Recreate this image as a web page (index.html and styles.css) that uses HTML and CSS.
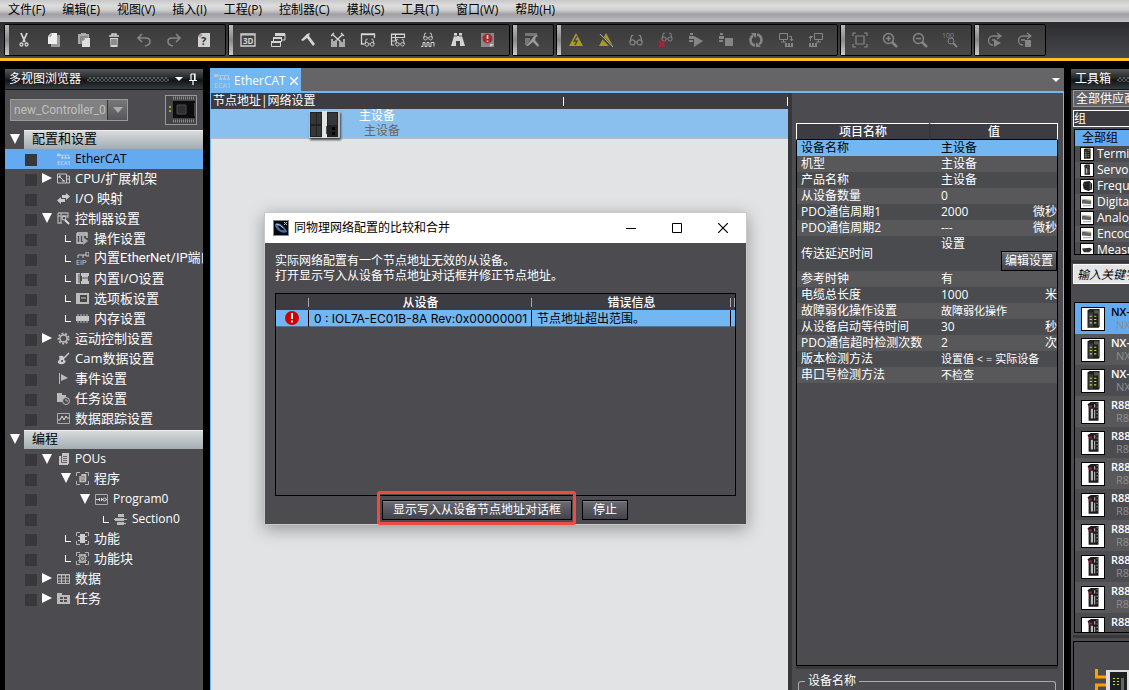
FILE: index.html
```html
<!DOCTYPE html>
<html lang="zh-CN">
<head>
  <meta charset="UTF-8">
  <meta name="viewport" content="width=device-width, initial-scale=1.0">
  <title>new_Controller_0</title>
  <link rel="stylesheet" href="styles.css">
</head>
<body>
  <!-- shared icons -->
  <svg class="sprite" width="0" height="0">
    <symbol id="glasses" viewBox="0 0 14 12">
      <g fill="none" stroke="currentColor" stroke-width="1.2">
        <circle cx="3.4" cy="8.4" r="2.5"/><circle cx="10.6" cy="8.4" r="2.5"/>
        <path d="M1 8L2.6 1.5H4.5M13 8L11.4 1.5H9.5M6 8h2"/>
      </g>
    </symbol>
    <symbol id="frame" viewBox="0 0 13 13">
      <path d="M4 .5H.5V4M9 .5h3.500V4M4 12.500H.5V9M9 12.500h3.500V9" fill="none" stroke="#b4b4b4"/>
    </symbol>
    <symbol id="doc" viewBox="0 0 13 13">
      <path d="M5 0h7v11h-1v1H2V3h3z" fill="#c4c4c4"/>
      <path d="M6 3.500h4M6 5.500h4M6 7.500h4M4.500 3v6.500H10" stroke="#66666a" fill="none"/>
    </symbol>
    <symbol id="unit" viewBox="0 0 20 20">
      <path d="M5 2l2-1h9v16l-1 1H5z" fill="#20211f"/>
      <path d="M6 4h4v13H6z" fill="#3c3d40"/>
      <path d="M11 2h4v3h-4z" fill="#555"/>
      <path d="M7 7h2v1H7zM7 10h2v1H7zM7 13h2v1H7zM11 7h2v1h-2zM11 10h2v1h-2zM11 13h2v1h-2z" fill="#d8d636"/>
      <path d="M15 3h1v13h-1z" fill="#777"/>
    </symbol>
    <symbol id="drive" viewBox="0 0 20 20">
      <path d="M5 3l3-2h7v17H6V5z" fill="#1c1c1e"/>
      <path d="M8 7h2v9H8zM11 3h1v3h-1zM11 8h1v8h-1z" fill="#b8b8b8"/>
      <path d="M13 2h2v1h-2zM13 5h2v1h-2zM13 8h2v1h-2zM13 11h2v1h-2zM13 14h2v1h-2z" fill="#777"/>
      <path d="M6 4h3v2H6z" fill="#a51c24"/>
    </symbol>
    <symbol id="slice" viewBox="0 0 13 13">
      <path d="M1 4l10 1v4L1 8z" fill="#666"/>
      <path d="M1 3l10 1v1L1 4z" fill="#b9b34a"/>
      <path d="M2 10h9v1H2z" fill="#999"/>
    </symbol>
  </svg>

  <div class="app">
    <nav class="menubar">
      <a href="#">文件(F)</a>
      <a href="#">编辑(E)</a>
      <a href="#">视图(V)</a>
      <a href="#">插入(I)</a>
      <a href="#">工程(P)</a>
      <a href="#">控制器(C)</a>
      <a href="#">模拟(S)</a>
      <a href="#">工具(T)</a>
      <a href="#">窗口(W)</a>
      <a href="#">帮助(H)</a>
    </nav>

    <div class="toolbar">
      <div class="tool-group">
        <button aria-label="剪切"><svg viewBox="0 0 16 16"><path d="M5 1l4 9M11 1L7 10" stroke="currentColor" stroke-width="1.800"/><g fill="none" stroke="currentColor" stroke-width="1.300"><circle cx="5.500" cy="12.500" r="1.500"/><circle cx="10.500" cy="12.500" r="1.500"/></g></svg></button>
        <button aria-label="复制"><svg viewBox="0 0 16 16"><path d="M5 3h9v12H5z" fill="#999"/><path d="M5 1h6v11H2V4z" fill="#eee"/><path d="M5 1v3H2" fill="none" stroke="#888"/></svg></button>
        <button aria-label="粘贴"><svg viewBox="0 0 16 16"><path d="M2 2h3V1h5v1h3v4h-1V4H4v8H2z" fill="#aaa"/><path d="M4 4h8v3H6v5H4z" fill="#888"/><path d="M8 6h6v9H6V8z" fill="#ddd"/><path d="M8 6v2H6" fill="none" stroke="#777"/></svg></button>
        <button aria-label="删除"><svg viewBox="0 0 16 16"><path d="M3 4h10M6 3.500V2h4v1.500" fill="none" stroke="currentColor" stroke-width="1.500"/><path d="M4 6h8l-.5 9h-7z" fill="currentColor"/><path d="M6 7v6M8 7v6M10 7v6" stroke="#444"/></svg></button>
        <button class="dim" aria-label="撤消"><svg viewBox="0 0 16 16"><path d="M2 6h8q4 0 4 3.500T9 14M6 2L2 6l4 4" fill="none" stroke="currentColor" stroke-width="1.600"/></svg></button>
        <button class="dim" aria-label="恢复"><svg viewBox="0 0 16 16"><path d="M14 6H6Q2 6 2 9.500T7 14M10 2l4 4-4 4" fill="none" stroke="currentColor" stroke-width="1.600"/></svg></button>
        <button aria-label="帮助"><svg viewBox="0 0 16 16"><path d="M5 1h9v14H2V4z" fill="#d0d0d0"/><path d="M5 1v3H2" fill="none" stroke="#777"/><text x="5" y="13" font-size="11" font-weight="700" fill="#333">?</text></svg></button>
      </div>
      <div class="tool-group">
        <button aria-label="3D"><svg viewBox="0 0 16 16"><path d="M1 2h14v12H1z" fill="none" stroke="currentColor" stroke-width="1.300"/><path d="M1 3h14" stroke="currentColor"/><text x="3" y="12" font-size="8" font-weight="700" fill="currentColor">3D</text></svg></button>
        <button aria-label="窗口"><svg viewBox="0 0 16 16"><path d="M5 2h10v6h-3" fill="none" stroke="currentColor"/><path d="M5 1h10v3H5zM3 5h9v2H3zM1 9h10v2H1z" fill="currentColor"/><path d="M1.500 10v4.500h9V10M3.500 7v2M11.500 7v3" fill="none" stroke="currentColor"/></svg></button>
        <button aria-label="编译"><svg viewBox="0 0 16 16"><path d="M1 8l6-6 3-1-1 3 6 8-2 2-6-8-4 3z" fill="currentColor"/></svg></button>
        <button aria-label="全部编译"><svg viewBox="0 0 16 16"><path d="M2 2l9 8M13 2L5 10M1 4l3-3M11 1l3 3" stroke="currentColor" stroke-width="1.300"/><path d="M1 7h2v2h2V8h2v7H1zM9 9h2v1h2V7h2v8H9z" fill="#aaa"/></svg></button>
        <button aria-label="监视窗口"><svg viewBox="0 0 16 16"><path d="M14.500 6V2h-13v10H4M1 2.500h14" fill="none" stroke="currentColor" stroke-width="1.300"/><use href="#glasses" x="4" y="6" width="11" height="9"/></svg></button>
        <button aria-label="监视表"><svg viewBox="0 0 16 16"><path d="M14.500 6V2h-13v11H4M1 2.500h14M1 5.500h13M1 9h4M5.500 2v7" fill="none" stroke="currentColor" stroke-width="1.200"/><use href="#glasses" x="5" y="6" width="10" height="9"/></svg></button>
        <button aria-label="数据跟踪"><svg viewBox="0 0 16 16"><use href="#glasses" x="3" y="0" width="10" height="9"/><path d="M1 14.500h2v-4h2v4h2v-4h2v4h2v-4h3v4" fill="none" stroke="currentColor"/></svg></button>
        <button aria-label="查找"><svg viewBox="0 0 16 16"><path d="M4 1h3v3h2V1h3v3l3 10h-5V9H6v5H1L4 4z" fill="currentColor"/><path d="M4 4h3M9 4h3" stroke="#555"/></svg></button>
        <button aria-label="故障排除"><svg viewBox="0 0 16 16"><path d="M1 1h13v14H1z" fill="#8b8a8b"/><circle cx="7.500" cy="6.500" r="5" fill="#a52832"/><path d="M7.500 3v4M7.500 8.500v1.500" stroke="#ccc" stroke-width="1.800"/><path d="M10 15v-3h4z" fill="#ccc"/></svg></button>
      </div>
      <div class="tool-group">
        <button class="dim" aria-label="工具"><svg viewBox="0 0 16 16"><path d="M1 1h12v3H1zM1 6h5v2l-3 5H1z" fill="#777"/><path d="M7 8l3-4 3-1 1 1-2 1-1 3 4 5-1 2-5-5-5 4H2z" fill="#999"/></svg></button>
      </div>
      <div class="tool-group dim">
        <button aria-label="在线"><svg viewBox="0 0 16 16"><path d="M8 1l7 13H1z" fill="#a8992e"/><path d="M9 4L6 9h3l-2 4" fill="none" stroke="#444" stroke-width="1.300"/></svg></button>
        <button aria-label="离线"><svg viewBox="0 0 16 16"><path d="M8 1l7 13H1z" fill="#a8992e"/><path d="M1 2l13 13" stroke="#444" stroke-width="3"/><path d="M2 2l13 13" stroke="#aaa"/></svg></button>
        <button aria-label="监视"><svg viewBox="0 0 16 16"><use href="#glasses" x="1" y="2" width="14" height="12"/></svg></button>
        <button aria-label="停止监视"><svg viewBox="0 0 16 16"><use href="#glasses" x="3" y="0" width="12" height="10"/><path d="M1 9l6 6M7 9l-6 6" stroke="#b12236" stroke-width="2"/></svg></button>
        <button aria-label="运行模式"><svg viewBox="0 0 16 16"><path d="M2 1h3v2H2zM1 4h5v3H1zM1 8h4v2H1zM6 4l9 5-9 6z" fill="currentColor"/></svg></button>
        <button aria-label="编程模式"><svg viewBox="0 0 16 16"><path d="M2 1h3v2H2zM1 4h5v3H1zM1 8h4v2H1zM7 6h8v8H7z" fill="currentColor"/></svg></button>
        <button aria-label="同步"><svg viewBox="0 0 16 16"><path d="M7 13.500A5.500 5.500 0 0 1 5 3.500M9 2.500a5.500 5.500 0 0 1 2 10" fill="none" stroke="currentColor" stroke-width="2.500"/><path d="M3 1h5v5zM13 15H8v-5z" fill="currentColor"/></svg></button>
        <button aria-label="传送到控制器"><svg viewBox="0 0 16 16"><path d="M1.500 1.500h8v6h-8zM5.500 7v3M3 10h5M11 4.500h2.500V9M12 7l1.500 2L15 7" fill="none" stroke="currentColor"/><path d="M7 11h8v4H7z" fill="currentColor"/><path d="M9.500 11v3M12.500 11v3" stroke="#444"/></svg></button>
        <button aria-label="从控制器传送"><svg viewBox="0 0 16 16"><path d="M6.500 1.500h8v6h-8zM10.500 7v3M8 10h5M5 4.500H2.500V9M1 6l1.500-2L4 6" fill="none" stroke="currentColor"/><path d="M1 11h8v4H1z" fill="currentColor"/><path d="M3.500 11v3M6.500 11v3" stroke="#444"/></svg></button>
      </div>
      <div class="tool-group dim">
        <button aria-label="适合窗口"><svg viewBox="0 0 16 16"><path d="M4 4h8v8H4zM1 4V1h3M12 1h3v3M1 12v3h3M12 15h3v-3" fill="none" stroke="currentColor" stroke-width="1.200"/></svg></button>
        <button aria-label="放大"><svg viewBox="0 0 16 16"><circle cx="6.500" cy="6.500" r="5" fill="none" stroke="currentColor" stroke-width="1.500"/><path d="M4 6.500h5M6.500 4v5" stroke="currentColor" stroke-width="1.500"/><path d="M10 10l5 5" stroke="currentColor" stroke-width="2.500"/></svg></button>
        <button aria-label="缩小"><svg viewBox="0 0 16 16"><circle cx="6.500" cy="6.500" r="5" fill="none" stroke="currentColor" stroke-width="1.500"/><path d="M4 6.500h5" stroke="currentColor" stroke-width="1.500"/><path d="M10 10l5 5" stroke="currentColor" stroke-width="2.500"/></svg></button>
        <button aria-label="100%"><svg viewBox="0 0 16 16"><text x="0" y="6" font-size="7" fill="currentColor">100</text><circle cx="9" cy="9" r="3" fill="none" stroke="currentColor"/><path d="M11 11l4 4" stroke="currentColor" stroke-width="2"/></svg></button>
      </div>
      <div class="tool-group dim">
        <button aria-label="开始模拟"><svg viewBox="0 0 16 16"><path d="M14 4H7a4.500 4.500 0 0 0 0 9M11 1l4 3-4 3M6 8h3" fill="none" stroke="currentColor" stroke-width="1.300"/><path d="M8 7l7 4-7 4z" fill="currentColor"/></svg></button>
        <button aria-label="停止模拟"><svg viewBox="0 0 16 16"><path d="M14 4H7a4.500 4.500 0 0 0 0 9M11 1l4 3-4 3M5 8h4" fill="none" stroke="currentColor" stroke-width="1.300"/><path d="M9 8h6v7H9z" fill="currentColor"/></svg></button>
      </div>
    </div>

    <div class="workspace">
      <!-- project tree -->
      <aside class="explorer">
        <header class="panel-head">
          <h2>多视图浏览器</h2>
          <span class="dots"></span>
          <span class="caret"></span>
          <svg class="pin" viewBox="0 0 8 12"><path d="M2 1h4v6M2 1v6M0 7.500h8M4 8v4" fill="none" stroke="#fff" stroke-width="1.200"/><path d="M5 1h1v6H5z" fill="#fff"/></svg>
        </header>
        <div class="controller">
          <div class="combo">
            <select aria-label="控制器" disabled><option>new_Controller_0</option></select>
            <span class="combo-arrow"></span>
          </div>
          <svg class="cpu" viewBox="0 0 32 30">
            <path d="M0 0h32v30H0z" fill="#999"/><path d="M1 1h30v28H1z" fill="#444446"/>
            <path d="M8 6h22v2h-1v13h1v2H8z" fill="#0c0c0c"/><path d="M12 10h9v9h-9z" fill="#2e2e30" stroke="#4a4a4a"/>
            <path d="M8 3h22M8 26h22" stroke="#8a8a8a" stroke-width="3" stroke-dasharray="1 1"/>
            <path d="M4 11h2v2H4zM4 15h2v2H4z" fill="#a8a02c"/>
          </svg>
        </div>

        <h3 class="section"><i class="open"></i><span>配置和设置</span></h3>
        <ul class="tree">
          <li class="selected latin"><i></i><svg viewBox="0 0 16 16"><path d="M0 1h4v3H0zM4 2h11v1H4zM6 3h1v2H6zM10 3h1v2h-1zM14 3h1v2h-1zM5 5h3v2H5zM9 5h3v2H9zM13 5h3v2h-3z" fill="currentColor"/><text x="0" y="15" font-size="7" font-weight="600" fill="currentColor">ECAT</text></svg>EtherCAT</li>
          <li><i class="closed"></i><svg viewBox="0 0 13 13"><path d="M.5 2h9v9h-9zM10 4h2.500v7H10M10 7h2" fill="none" stroke="#c4c4c4"/><path d="M2 4l5 5M2 6V4h2M5 9h3" stroke="#ddd" fill="none"/></svg>CPU/扩展机架</li>
          <li><i></i><svg viewBox="0 0 13 13"><path d="M5 3h4V1l4 3.500L9 8V6H5zM8 7H4V5L0 8.500 4 12v-2h4z" fill="#ccc"/></svg>I/O 映射</li>
          <li><i class="open"></i><svg viewBox="0 0 13 13"><path d="M1 1h10v5M1 1v10h4M1 4h10M4 1v10" fill="none" stroke="#aaa" stroke-width="1.300"/><circle cx="7" cy="6" r="2" fill="none" stroke="#ddd"/><path d="M8 8l4 4" stroke="#ddd" stroke-width="2"/></svg>控制器设置</li>
          <li class="l2"><i class="leaf"></i><svg viewBox="0 0 13 13"><path d="M1 1h10v5M1 1v10h6M1 3h10M4 4v7M7 4v5" fill="none" stroke="#ccc" stroke-width="1.300"/><path d="M7 5l5 4-5 4z" fill="#aaa"/></svg>操作设置</li>
          <li class="l2 narrow"><i class="leaf"></i><svg viewBox="0 0 13 13"><path d="M2 3h8M2 3v3M7 3v3M10 0h3v4h-3z" stroke="#ccc" fill="none"/><text x="0" y="13" font-size="7" fill="#ccc">EIP</text></svg>内置EtherNet/IP端口</li>
          <li class="l2"><i class="leaf"></i><svg viewBox="0 0 13 13"><path d="M0 1h4v11H0zM5 1h8v3H5zM5 9h8v3H5zM6 4h6v5H6z" fill="#c4c4c4"/><path d="M6 6h6M3 2v9" stroke="#555"/></svg>内置I/O设置</li>
          <li class="l2"><i class="leaf"></i><svg viewBox="0 0 13 13"><path d="M0 1h13v11H0z" fill="#bbb"/><path d="M4 3h7v7H4z" fill="#444"/><path d="M5 6h5" stroke="#ccc"/></svg>选项板设置</li>
          <li class="l2"><i class="leaf"></i><svg viewBox="0 0 13 13"><path d="M0 4h13v5H0z" fill="#ccc"/><path d="M2 2v9M5 2v9M8 2v9M11 2v9" stroke="#bbb"/></svg>内存设置</li>
          <li><i class="closed"></i><svg viewBox="0 0 13 13"><circle cx="6.500" cy="6.500" r="5" fill="none" stroke="#bbb" stroke-width="2" stroke-dasharray="2 1.500"/><circle cx="6.500" cy="6.500" r="3.500" fill="none" stroke="#bbb" stroke-width="1.500"/></svg>运动控制设置</li>
          <li><i></i><svg viewBox="0 0 13 13"><path d="M2 4q5-1 5 2t2 3q-2 4-6 3t-1-4q1-1 0-4z" fill="#ccc"/><path d="M5 8l7-7" stroke="#ccc" stroke-width="1.500"/><circle cx="5" cy="9" r="1" fill="#444"/></svg>Cam数据设置</li>
          <li><i></i><svg viewBox="0 0 13 13"><path d="M2.500 1v11" stroke="#bbb"/><path d="M4 2l7 4-7 3z" fill="#bbb"/></svg>事件设置</li>
          <li><i></i><svg viewBox="0 0 13 13"><path d="M0 1h5v2h4v3L6 10H0z" fill="#bbb"/><circle cx="9" cy="9" r="3.500" fill="#4c4b50" stroke="#bbb"/><path d="M9 7v2h2" fill="none" stroke="#bbb"/></svg>任务设置</li>
          <li><i></i><svg viewBox="0 0 13 13"><path d="M.5 1.500h12v10H.5z" fill="none" stroke="#aaa"/><path d="M1 8h2l2-4 2 4 2-4 1 2h2" fill="none" stroke="#ddd"/></svg>数据跟踪设置</li>
        </ul>

        <h3 class="section"><i class="open"></i><span>编程</span></h3>
        <ul class="tree">
          <li class="latin"><i class="open"></i><svg viewBox="0 0 13 13"><use href="#doc"/></svg>POUs</li>
          <li class="l2"><i class="open"></i><svg viewBox="0 0 13 13"><use href="#frame"/><use href="#doc" x="2" y="2" width="9" height="9"/></svg>程序</li>
          <li class="l3 latin"><i class="open"></i><svg viewBox="0 0 13 13"><path d="M.5 1.500h12v10H.5z" fill="none" stroke="#aaa"/><path d="M1 6.500h3M4.500 5v3M6.500 5v3M6 6.500h2M11 6.500h1" stroke="#ddd"/><circle cx="9.500" cy="6.500" r="1.500" fill="none" stroke="#ddd"/></svg>Program0</li>
          <li class="l4 latin"><i class="leaf"></i><svg viewBox="0 0 13 13"><path d="M4 1h6v3H4zM1 5h9v3H1zM3 9h7v3H3z" fill="#bbb"/><path d="M10 6.500h3M0 6.500h2M10 10.500h2" stroke="#bbb"/></svg>Section0</li>
          <li class="l2"><i class="leaf"></i><svg viewBox="0 0 13 13"><use href="#frame"/><path d="M4 2h5v9H4zM2 4h9v1H2zM2 8h9v1H2z" fill="#ccc"/></svg>功能</li>
          <li class="l2"><i class="leaf"></i><svg viewBox="0 0 13 13"><use href="#frame"/><path d="M3 2h7v9H3zM2 4h9v1H2zM2 8h9v1H2z" fill="#aaa"/><circle cx="6.500" cy="6.500" r="2" fill="none" stroke="#555"/></svg>功能块</li>
          <li><i class="closed"></i><svg viewBox="0 0 13 13"><path d="M.5 2.500h12v9H.5z" fill="none" stroke="#bbb"/><path d="M1 3h11M1 6h11M1 9h11M4.500 3v8M8.500 3v8" stroke="#bbb"/></svg>数据</li>
          <li><i class="closed"></i><svg viewBox="0 0 13 13"><path d="M0 1h5v2h8v9H0z" fill="#bbb"/><path d="M3 5h3v2H3zM7 5h3v2H7zM3 8h3v2H3zM7 8h3v2H7z" fill="#4c4b50"/></svg>任务</li>
        </ul>
      </aside>

      <!-- EtherCAT editor -->
      <main class="editor">
        <div class="tabs">
          <button class="tab"><svg class="tab-icon" viewBox="0 0 16 16"><path d="M0 1h4v3H0zM4 2h11v1H4zM6 3h1v2H6zM10 3h1v2h-1zM14 3h1v2h-1zM5 5h3v2H5zM9 5h3v2H9zM13 5h3v2h-3z" fill="currentColor"/><text x="0" y="15" font-size="7" font-weight="600" fill="currentColor">ECAT</text></svg>EtherCAT<svg class="tab-close" viewBox="0 0 8 8"><path d="M0 0l8 8M8 0L0 8" stroke="#fff" stroke-width="1.500"/></svg></button>
          <span class="caret"></span>
        </div>
        <div class="editor-body">
          <section class="network">
            <div class="network-head"><span>节点地址|网络设置</span><i></i><i></i></div>
            <div class="master">
              <svg class="master-icon" viewBox="0 0 31 27">
                <path d="M0 0h31v27H0z" fill="#bbb"/><path d="M1 1h12v25H1zM18 1h11v25H18z" fill="#202224"/>
                <path d="M2 2h5v11H2zM8 2h4v11H8zM2 15h5v10H2zM8 15h4v10H8zM19 2h9v12h-9z" fill="#34363a"/>
                <path d="M13 0h5v27h-5z" fill="#e4e4e4"/><path d="M17 15h1v8h-1z" fill="#555"/>
                <path d="M23 16h3v3h-3zM23 21h3v3h-3z" fill="#000"/>
              </svg>
              <div class="master-text"><span>主设备</span><small>主设备</small></div>
            </div>
          </section>

          <section class="props">
            <table>
              <colgroup><col><col class="col-value"><col class="col-unit"></colgroup>
              <thead><tr><th>项目名称</th><th colspan="2">值</th></tr></thead>
              <tbody>
                <tr class="selected"><td>设备名称</td><td>主设备</td><td></td></tr>
                <tr><td>机型</td><td>主设备</td><td></td></tr>
                <tr><td>产品名称</td><td>主设备</td><td></td></tr>
                <tr><td>从设备数量</td><td>0</td><td></td></tr>
                <tr><td>PDO通信周期1</td><td>2000</td><td>微秒</td></tr>
                <tr><td>PDO通信周期2</td><td>---</td><td>微秒</td></tr>
                <tr class="tall"><td>传送延迟时间</td><td colspan="2"><div class="delay"><span>设置</span><button class="btn">编辑设置</button></div></td></tr>
                <tr><td>参考时钟</td><td>有</td><td></td></tr>
                <tr><td>电缆总长度</td><td>1000</td><td>米</td></tr>
                <tr><td>故障弱化操作设置</td><td class="small">故障弱化操作</td><td></td></tr>
                <tr><td>从设备启动等待时间</td><td>30</td><td>秒</td></tr>
                <tr><td>PDO通信超时检测次数</td><td>2</td><td>次</td></tr>
                <tr><td>版本检测方法</td><td class="small" colspan="2">设置值 &lt; = 实际设备</td></tr>
                <tr><td>串口号检测方法</td><td class="small">不检查</td><td></td></tr>
              </tbody>
            </table>
            <div class="props-space"></div>
            <fieldset><legend>设备名称</legend></fieldset>
          </section>
        </div>
      </main>

      <!-- toolbox, continues past the right edge -->
      <aside class="toolbox">
        <header class="panel-head"><h2>工具箱</h2><span class="dots"></span></header>
        <select class="vendor" aria-label="供应商"><option>全部供应商</option></select>
        <div class="group-title">组</div>
        <ul class="groups">
          <li class="selected">全部组</li>
          <li><svg viewBox="0 0 20 20"><use href="#unit"/></svg>Terminal</li>
          <li><svg viewBox="0 0 20 20"><use href="#drive"/></svg>Servo</li>
          <li><svg viewBox="0 0 13 13"><path d="M3 2l6-1 3 3v6l-4 2-5-2-1-5z" fill="#222"/><path d="M10 3v7M4 4v1" stroke="#777"/></svg>Frequency</li>
          <li><svg viewBox="0 0 13 13"><use href="#slice"/></svg>Digital</li>
          <li><svg viewBox="0 0 13 13"><use href="#slice"/></svg>Analog</li>
          <li><svg viewBox="0 0 13 13"><use href="#slice"/></svg>Encoder</li>
          <li><svg viewBox="0 0 13 13"><path d="M1 5l9-1 2 2-3 3H3z" fill="#333"/></svg>Measure</li>
        </ul>
        <div class="search"><input type="text" placeholder="输入关键字" aria-label="输入关键字"></div>
        <ul class="devices">
          <li class="selected"><svg viewBox="0 0 20 20"><use href="#unit"/></svg><div>NX-<small>NX</small></div></li>
          <li><svg viewBox="0 0 20 20"><use href="#unit"/></svg><div>NX-<small>NX</small></div></li>
          <li><svg viewBox="0 0 20 20"><use href="#unit"/></svg><div>NX-<small>NX</small></div></li>
          <li><svg viewBox="0 0 20 20"><use href="#drive"/></svg><div>R88<small>R8</small></div></li>
          <li><svg viewBox="0 0 20 20"><use href="#drive"/></svg><div>R88<small>R8</small></div></li>
          <li><svg viewBox="0 0 20 20"><use href="#drive"/></svg><div>R88<small>R8</small></div></li>
          <li><svg viewBox="0 0 20 20"><use href="#drive"/></svg><div>R88<small>R8</small></div></li>
          <li><svg viewBox="0 0 20 20"><use href="#drive"/></svg><div>R88<small>R8</small></div></li>
          <li><svg viewBox="0 0 20 20"><use href="#drive"/></svg><div>R88<small>R8</small></div></li>
          <li><svg viewBox="0 0 20 20"><use href="#drive"/></svg><div>R88<small>R8</small></div></li>
          <li><svg viewBox="0 0 20 20"><use href="#drive"/></svg><div>R88</div></li>
        </ul>
        <div class="preview">
          <svg viewBox="0 0 36 24">
            <path d="M1.500 3v8H12M12 19H1.500v5" fill="none" stroke="#ffa000" stroke-width="3"/>
            <path d="M11 4h25v20H11z" fill="#ddd"/><path d="M15 6h17v18H15z" fill="#1d1e20"/>
            <path d="M18 12h2v1h-2zM18 15h2v1h-2zM18 18h2v1h-2zM22 12h2v1h-2zM22 15h2v1h-2zM22 18h2v1h-2z" fill="#d8d636"/>
            <path d="M26 12h3v12h-3z" fill="#666"/>
          </svg>
        </div>
      </aside>
    </div>

    <!-- compare and merge dialog -->
    <div class="dialog" role="dialog" aria-labelledby="dialog-title">
      <div class="dialog-title">
        <svg class="dialog-icon" viewBox="0 0 16 16"><path d="M0 0h16v16H0z" fill="#888"/><path d="M1 1h14v14H1z" fill="#05080f"/><path d="M2 4q4-2 8 2t4 6q-4 2-8-1T2 4z" fill="#4a6da0"/><path d="M5 6q3-1 6 4-4 1-6-4z" fill="#05080f"/><path d="M3 4q4 0 7 4" fill="none" stroke="#a9c4de"/><path d="M11 2l3 3M14 2l-3 3" stroke="#ccc"/></svg>
        <h1 id="dialog-title">同物理网络配置的比较和合并</h1>
        <button aria-label="最小化"><svg viewBox="0 0 10 10"><path d="M0 5.500h10" stroke="#000"/></svg></button>
        <button aria-label="最大化"><svg viewBox="0 0 10 10"><path d="M.5.500h9v9h-9z" fill="none" stroke="#000"/></svg></button>
        <button aria-label="关闭"><svg viewBox="0 0 10 10"><path d="M0 0l10 10M10 0L0 10" stroke="#000" stroke-width="1.200"/></svg></button>
      </div>
      <div class="dialog-body">
        <p>实际网络配置有一个节点地址无效的从设备。<br>打开显示写入从设备节点地址对话框并修正节点地址。</p>
        <div class="errors">
          <table>
            <colgroup><col class="col-icon"><col class="col-slave"><col><col class="col-end"></colgroup>
            <thead><tr><th></th><th>从设备</th><th>错误信息</th><th></th></tr></thead>
            <tbody>
              <tr>
                <td><svg class="error-icon" viewBox="0 0 14 14"><circle cx="7" cy="7" r="7" fill="#d00000"/><path d="M7 2v6M7 9.500v2" stroke="#fff" stroke-width="2"/></svg></td>
                <td class="slave">0 : IOL7A-EC01B-8A Rev:0x00000001</td>
                <td>节点地址超出范围。</td>
                <td></td>
              </tr>
            </tbody>
          </table>
        </div>
        <div class="dialog-actions">
          <div class="marked"><button class="btn">显示写入从设备节点地址对话框</button></div>
          <button class="btn">停止</button>
        </div>
      </div>
    </div>
  </div>
</body>
</html>
```
FILE: styles.css
```css
* {
  box-sizing: border-box;
}

body {
  margin: 0;
  font-family: "Open Sans", "Noto Sans CJK SC", sans-serif;
  font-size: 12px;
  line-height: 16px;
  color: #fff;
  background: #000;
}

h1, h2, h3, ul, p {
  margin: 0;
  padding: 0;
  font-size: 12px;
  font-weight: 400;
}

ul {
  list-style: none;
}

button, input, select {
  font: inherit;
  color: inherit;
  margin: 0;
  padding: 0;
  border: 0;
  background: none;
}

svg {
  display: block;
  flex: none;
}

.sprite {
  position: absolute;
}

.app {
  position: relative;
  display: flex;
  flex-direction: column;
  height: 100vh;
  overflow: hidden;
}

/* menu and toolbar */

.menubar {
  display: flex;
  gap: 17px;
  height: 22px;
  flex: none;
  padding: 2px 8px;
  background: linear-gradient(#c8c8ca, #dcdcdc 25%, #cfcfd0 45%, #a0a0a4 65%, #c2c2c5);
}

.menubar a {
  color: #000;
  text-decoration: none;
  white-space: nowrap;
}

.toolbar {
  display: flex;
  gap: 2px;
  height: 39px;
  flex: none;
  padding: 2px 4px 3px;
  background: linear-gradient(#2c2c30, #46474c);
  border-bottom: 3px solid #fdbf22;
}

.tool-group {
  display: flex;
  height: 32px;
  padding-right: 6px;
  border: 1px solid #000;
  border-radius: 2px;
  background: linear-gradient(#3a3a3a, #484848);
  color: #d4d4d4;
}

.tool-group::before {
  content: "";
  width: 4px;
  background: linear-gradient(#bbb, #888 50%, #ccc);
}

.tool-group button {
  width: 30px;
  display: flex;
  align-items: center;
  justify-content: center;
}

.tool-group svg {
  width: 16px;
  height: 16px;
}

.tool-group.dim, .tool-group .dim {
  color: #858585;
}

/* panels */

.workspace {
  display: grid;
  grid-template-columns: 198px minmax(0, 1fr) 58px;
  gap: 7px;
  flex: 1;
  min-height: 0;
  padding: 7px 0 0 5px;
}

.panel-head {
  display: flex;
  align-items: center;
  gap: 6px;
  height: 22px;
  padding: 0 6px 0 4px;
  border-top: 1px solid #000;
  background: linear-gradient(#55585c, #24282a 45%, #101416 55%, #343a3e);
  border-bottom: 1px solid #111;
}

.panel-head h2 {
  white-space: nowrap;
}

.dots {
  flex: 1;
  height: 5px;
  background-image: conic-gradient(#777 25%, transparent 0), conic-gradient(#777 25%, transparent 0);
  background-size: 4px 4px;
  background-position: 0 0, 2px 2px;
  opacity: 0.7;
}

.caret {
  border: 4px solid transparent;
  border-top-color: #fff;
  border-bottom: 0;
}

.explorer, .toolbox {
  background: #4c4b50;
  overflow: hidden;
}

.pin {
  width: 8px;
  height: 12px;
}

.controller {
  display: flex;
  justify-content: space-between;
  align-items: center;
  height: 39px;
  padding: 0 6px 0 5px;
}

.cpu {
  width: 32px;
  height: 30px;
}

.combo {
  display: flex;
  width: 118px;
  height: 22px;
  border: 1px solid #9a9a9a;
  background: #808080;
}

.combo select {
  flex: 1;
  min-width: 0;
  padding-left: 3px;
  appearance: none;
  font-family: Roboto, sans-serif;
  color: #c0c0c0;
  opacity: 1;
}

.combo-arrow {
  display: flex;
  align-items: center;
  justify-content: center;
  width: 20px;
  border-left: 1px solid #333;
  background: linear-gradient(#777, #56565e);
}

.combo-arrow::after {
  content: "";
  border: 5px solid transparent;
  border-top: 6px solid #aaa;
  border-bottom: 0;
}

/* tree */

.section {
  display: flex;
  align-items: center;
  height: 20px;
  padding-left: 5px;
  font-size: 13px;
  color: #000;
}

.section span {
  flex: 1;
  margin-left: 4px;
  padding-left: 8px;
  height: 19px;
  line-height: 15px;
  border-top: 1px solid #eee;
  background: linear-gradient(#d8dadb, #a2adb2);
}

.tree li {
  display: flex;
  align-items: center;
  height: 20px;
  padding: 0 0 2px 20px;
  font-size: 13px;
  white-space: nowrap;
}

.tree li::before {
  content: "";
  flex: none;
  width: 12px;
  height: 12px;
  margin: 4px 5px 0 0;
  background: #38383c;
}

.tree .latin {
  padding-bottom: 0;
  font-size: 12px;
}

.tree .latin::before {
  margin-top: 2px;
}

.tree .narrow {
  font-family: Roboto, "Noto Sans CJK SC", sans-serif;
}

.tree .selected {
  background: #64aaf0;
  color: #000;
}

.tree i, .section i {
  flex: none;
  width: 10px;
}

.tree i {
  margin-right: 5px;
}

.tree svg {
  width: 13px;
  height: 13px;
  margin-right: 5px;
}

.tree .selected svg {
  color: #c4d4e4;
}

.open {
  border: 5px solid transparent;
  border-top: 10px solid #fff;
  border-bottom: 0;
}

.closed {
  border: 5px solid transparent;
  border-left: 10px solid #fff;
  border-right: 0;
}

.tree .leaf {
  width: 6px;
  height: 7px;
  margin-left: 4px;
  border-left: 1px solid #fff;
  border-bottom: 1px solid #fff;
}

.tree .l2::before {
  margin-right: 24px;
}

.tree .l3::before {
  margin-right: 43px;
}

.tree .l4::before {
  margin-right: 62px;
}

/* editor */

.editor {
  display: flex;
  flex-direction: column;
  min-height: 0;
}

.tabs {
  display: flex;
  align-items: center;
  justify-content: space-between;
  height: 25px;
  flex: none;
  padding-right: 4px;
  background: #656567;
  border-bottom: 2px solid #72b6f2;
}

.tab {
  display: flex;
  align-items: center;
  height: 23px;
  padding: 2px 3px 0 4px;
  background: #72b6f2;
}

.tab-icon {
  width: 16px;
  height: 16px;
  margin-right: 4px;
  color: #b7c6d4;
}

.tab-close {
  width: 8px;
  height: 8px;
  margin-left: 4px;
}

.editor-body {
  display: grid;
  grid-template-columns: minmax(0, 1fr) 275px;
  flex: 1;
  min-height: 0;
  border: 1px solid #72b6f2;
  border-width: 0 1px;
}

.network {
  background: #e2e3e5;
}

.network-head {
  display: flex;
  align-items: center;
  height: 16px;
  padding-left: 2px;
  background: #3c3c42;
}

.network-head span {
  flex: 0 0 350px;
  line-height: 14px;
}

.network-head i {
  width: 1px;
  height: 9px;
  background: #fff;
}

.network-head i:last-child {
  margin-left: auto;
}

.master {
  display: flex;
  height: 30px;
  padding: 2px 98px;
  background: #8ac0ee;
  border-bottom: 1px solid #b8bcc0;
}

.master-icon {
  width: 31px;
  height: 27px;
  box-shadow: 1px 2px 2px #444;
}

.master-text {
  margin-left: 19px;
  line-height: 15px;
  margin-top: -3px;
}

.master-text small {
  display: block;
  margin-left: 5px;
  font-size: 12px;
  color: #666;
}

.props {
  display: flex;
  flex-direction: column;
  min-width: 0;
  padding: 30px 5px 0 4px;
  background: #4c4b50;
  border-left: 4px solid #37373a;
}

.props table {
  width: 100%;
  border-spacing: 0;
  table-layout: fixed;
}

.col-value {
  width: 93px;
}

.col-unit {
  width: 36px;
}

.props th {
  height: 17px;
  padding: 0;
  line-height: 14px;
  font-weight: 500;
  background: #3c3c42;
  border-top: 1px solid #fff;
  border-left: 1px solid #fff;
  border-bottom: 1px solid #000;
}

.props th + th {
  border-left: 2px solid #37373a;
  border-right: 1px solid #fff;
}

.props td {
  height: 16px;
  padding: 0 0 0 12px;
  line-height: 16px;
  white-space: nowrap;
  overflow: hidden;
}

.props td:first-child {
  padding-left: 4px;
  border-left: 1px solid #000;
}

.props td:last-child {
  border-right: 1px solid #000;
}

.props td:nth-child(3) {
  padding: 0;
  text-align: right;
}

.props tbody tr:nth-child(even) {
  background: #58585b;
}

.props tbody tr:nth-child(odd) {
  background: #4a4b4e;
}

.props tbody tr.selected {
  background: #72b6f2;
  color: #000;
}

.props .small {
  font-size: 11px;
}

.props .tall td {
  height: 35px;
}

.delay {
  display: flex;
  justify-content: space-between;
  height: 35px;
}

.delay .btn {
  align-self: flex-end;
  padding: 0 3px;
}

.props-space {
  flex: 1;
  margin-bottom: 9px;
  border: 1px solid #000;
  border-top: 0;
  box-shadow: 0 3px #37373a;
}

.props fieldset {
  height: 15px;
  margin: 0 2px;
  padding: 0 6px;
  flex: none;
  border: 1px solid #aaa;
  border-bottom: 0;
  border-radius: 3px 3px 0 0;
}

.props legend {
  padding: 0 3px;
  line-height: 12px;
}

.btn {
  height: 20px;
  border: 1px solid #000;
  background: linear-gradient(#6c6c76, #42424a);
  box-shadow: inset 0 1px #85858c;
  line-height: 18px;
  white-space: nowrap;
}

/* toolbox */

.toolbox {
  display: flex;
  flex-direction: column;
  white-space: nowrap;
}

.toolbox .panel-head {
  flex: none;
  padding-right: 0;
}

.vendor {
  width: 120px;
  height: 17px;
  flex: none;
  margin-left: 2px;
  padding-left: 2px;
  appearance: none;
  border: 1px solid #999;
  background: #626266;
}

.group-title {
  width: 120px;
  height: 17px;
  flex: none;
  margin: 3px 0 2px 2px;
  line-height: 15px;
  border: 1px solid #fff;
  background: #3c3c42;
}

.groups {
  width: 120px;
  height: 126px;
  flex: none;
  margin-left: 3px;
  border: 1px solid #000;
  overflow: hidden;
}

.groups li {
  display: flex;
  align-items: center;
  gap: 3px;
  height: 16px;
  padding-left: 5px;
  font-weight: 500;
}

.groups li:nth-child(odd), .devices li:nth-child(even) {
  background: #58585b;
}

.groups .selected {
  padding-left: 7px;
  font-weight: 400;
}

.toolbox li.selected {
  background: #64aaf0;
  color: #000;
}

.groups svg {
  width: 14px;
  height: 14px;
  border: 1px solid #000;
  background: #fff;
}

.search {
  flex: none;
  margin: 5px 0 15px;
  padding: 1px 0 3px 2px;
  border-top: 3px solid #37373a;
}

.search input {
  width: 120px;
  height: 20px;
  padding-left: 3px;
  border: 1px solid #fff;
  background: #e4e4e6;
  font-style: italic;
}

.search input::placeholder {
  color: #000;
  opacity: 1;
}

.devices {
  flex: 1;
  min-height: 0;
  width: 120px;
  margin-left: 3px;
  border: 1px solid #000;
  overflow: hidden;
}

.devices li {
  display: flex;
  gap: 6px;
  height: 31px;
  padding: 4px 0 0 6px;
  font-weight: 600;
}

.devices li div {
  margin-top: -2px;
  font-size: 11px;
  line-height: 13px;
}

.devices small {
  display: block;
  padding-left: 5px;
  font-size: 11px;
  font-weight: 400;
  color: #8e8e90;
}

.devices svg {
  width: 24px;
  height: 24px;
  border: 1px solid #000;
  background: #fff;
}

.preview {
  width: 120px;
  height: 49px;
  flex: none;
  margin: 8px 0 0 2px;
  padding: 24px 0 0 21px;
  border: 1px solid #000;
  border-bottom: 0;
  box-shadow: 0 -3px #4c4b50, 0 -6px #37373a;
}

.preview svg {
  width: 36px;
  height: 24px;
}

/* dialog */

.dialog {
  position: absolute;
  top: 212px;
  left: 264px;
  width: 483px;
  background: #4c4b50;
  border: 1px solid #c8c8c8;
  box-shadow: 0 4px 16px rgba(0, 0, 0, 0.35);
}

.dialog-title {
  display: flex;
  align-items: center;
  height: 30px;
  padding-left: 8px;
  background: #fff;
  color: #000;
}

.dialog-icon {
  width: 16px;
  height: 16px;
}

.dialog-title h1 {
  flex: 1;
  margin-left: 5px;
}

.dialog-title button {
  display: flex;
  align-items: center;
  justify-content: center;
  width: 46px;
  height: 30px;
}

.dialog-title button svg {
  width: 10px;
  height: 10px;
}

.dialog-body {
  padding: 10px 10px 0;
}

.dialog-body p {
  line-height: 15px;
}

.errors {
  height: 203px;
  margin-top: 10px;
  border: 1px solid #000;
}

.errors table {
  width: 100%;
  border-spacing: 0;
  table-layout: fixed;
}

.col-icon {
  width: 33px;
}

.col-slave {
  width: 223px;
}

.col-end {
  width: 4px;
}

.errors th {
  height: 16px;
  padding: 0;
  line-height: 15px;
  font-weight: 500;
  background: linear-gradient(#aaa, #aaa) right center / 1px 9px no-repeat #3c3c42;
}

.errors td {
  height: 17px;
  padding: 0 5px;
  line-height: 15px;
  white-space: nowrap;
  color: #000;
  background: #72b6f2;
  border-right: 1px solid #000;
  border-bottom: 1px solid #56738e;
}

.errors .slave {
  font-family: Inter, sans-serif;
}

.errors td:last-child {
  padding: 0;
  border-right: 0;
}

.error-icon {
  width: 14px;
  height: 14px;
  margin: 0 auto;
}

.dialog-actions {
  display: flex;
  align-items: center;
  justify-content: center;
  gap: 6px;
  height: 28px;
  padding-right: 6px;
}

/* highlight round the suggested action */
.marked {
  display: flex;
  margin: -5px 0 -1px;
  padding: 6px 1px 2px 2px;
  border: 3px solid #f04b3c;
  border-radius: 3px;
}

.dialog-actions .btn {
  padding: 0 10px;
}
```
